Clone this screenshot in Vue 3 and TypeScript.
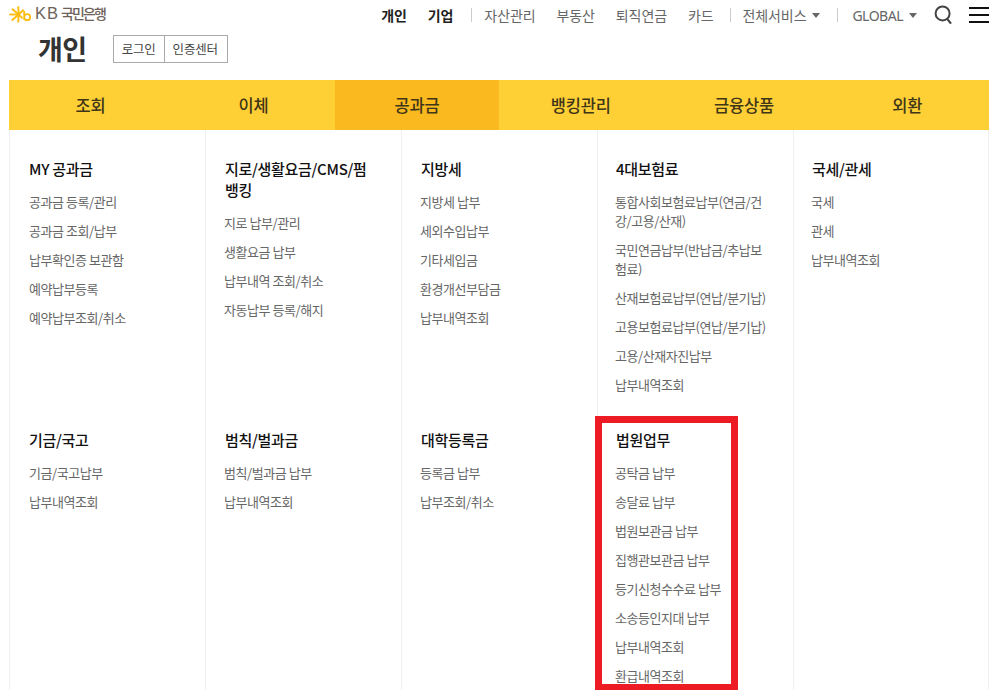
<script setup lang="ts">
interface Group { title: string; items: string[] }
const tabs = ['조회', '이체', '공과금', '뱅킹관리', '금융상품', '외환']
const rowOne: Group[] = [
  { title: 'MY 공과금', items: ['공과금 등록/관리', '공과금 조회/납부', '납부확인증 보관함', '예약납부등록', '예약납부조회/취소'] },
  { title: '지로/생활요금/CMS/펌뱅킹', items: ['지로 납부/관리', '생활요금 납부', '납부내역 조회/취소', '자동납부 등록/해지'] },
  { title: '지방세', items: ['지방세 납부', '세외수입납부', '기타세입금', '환경개선부담금', '납부내역조회'] },
  { title: '4대보험료', items: ['통합사회보험료납부(연금/건강/고용/산재)', '국민연금납부(반납금/추납보험료)', '산재보험료납부(연납/분기납)', '고용보험료납부(연납/분기납)', '고용/산재자진납부', '납부내역조회'] },
  { title: '국세/관세', items: ['국세', '관세', '납부내역조회'] },
]
const rowTwo: Group[] = [
  { title: '기금/국고', items: ['기금/국고납부', '납부내역조회'] },
  { title: '범칙/벌과금', items: ['범칙/벌과금 납부', '납부내역조회'] },
  { title: '대학등록금', items: ['등록금 납부', '납부조회/취소'] },
  { title: '법원업무', items: ['공탁금 납부', '송달료 납부', '법원보관금 납부', '집행관보관금 납부', '등기신청수수료 납부', '소송등인지대 납부', '납부내역조회', '환급내역조회'] },
  { title: '', items: [] },
]
const rows = [rowOne, rowTwo]
</script>

<template>
  <div class="page">
    <header class="top">
      <a class="logo">
        <svg class="logo-mark" width="24" height="24" viewBox="0 0 24 24" aria-hidden="true">
          <g stroke="#fbbc12" stroke-width="1.9">
            <line x1="9.7" y1="12.5" x2="0.3" y2="12.5" />
            <line x1="9.7" y1="12.5" x2="3" y2="6.8" />
            <line x1="9.7" y1="12.5" x2="2.7" y2="18.5" />
            <line x1="9.7" y1="12.5" x2="9.2" y2="4.4" />
            <line x1="9.7" y1="12.5" x2="9.2" y2="20.4" />
            <line x1="9.7" y1="12.5" x2="14.6" y2="7.6" />
            <line x1="9.7" y1="12.5" x2="13.6" y2="16.4" />
          </g>
          <path d="M15.2 9 V18 M15.2 15.2 a3 3 0 1 0 6 0 a3 3 0 1 0 -6 0" fill="none" stroke="#fbbc12" stroke-width="1.8" />
        </svg>
        <span class="logo-kb">KB</span>
        <span class="logo-name">국민은행</span>
      </a>
      <nav class="util">
        <a class="strong">개인</a>
        <a class="strong last">기업</a>
        <i class="sep"></i>
        <a>자산관리</a>
        <a>부동산</a>
        <a>퇴직연금</a>
        <a class="last-plain">카드</a>
        <i class="sep"></i>
        <a class="caret">전체서비스</a>
        <i class="sep sep-g"></i>
        <a class="caret global">GLOBAL</a>
        <svg class="search" width="18" height="20" viewBox="0 0 18 20" aria-hidden="true">
          <circle cx="8.6" cy="8.4" r="7" fill="none" stroke="#444" stroke-width="2" />
          <line x1="12.8" y1="13.4" x2="17" y2="18.6" stroke="#444" stroke-width="2.2" />
        </svg>
        <span class="burger"><b></b><b></b><b></b></span>
      </nav>
    </header>

    <div class="sub">
      <h1>개인</h1>
      <div class="btns">
        <a>로그인</a>
        <a>인증센터</a>
      </div>
    </div>

    <nav class="tabs">
      <a v-for="t in tabs" :key="t" :class="{ on: t === '공과금' }">{{ t }}</a>
    </nav>

    <section class="menu">
      <div v-for="(row, r) in rows" :key="r" class="row" :class="'row-' + r">
        <div v-for="(g, i) in row" :key="i" class="col">
          <h3 v-if="g.title">{{ g.title }}</h3>
          <ul>
            <li v-for="it in g.items" :key="it">{{ it }}</li>
          </ul>
        </div>
      </div>
    </section>

    <div class="mark"></div>
  </div>
</template>

<style>
html, body { margin: 0; padding: 0; overflow: hidden; background: #fff; }
</style>

<style scoped>
.page {
  position: relative;
  width: 993px;
  height: 690px;
  overflow: hidden;
  background: #fff;
  font-family: "Noto Sans CJK KR", "Noto Sans", sans-serif;
  color: #666;
}
.top {
  display: flex;
  justify-content: space-between;
  align-items: flex-start;
  height: 30px;
  padding-left: 9px;
}
.logo { display: flex; align-items: center; height: 27px; }
.logo-mark { display: block; margin-right: 2px; }
.logo-kb { font: 400 16.5px/27px "Liberation Sans", sans-serif; color: #6e6259; letter-spacing: 1px; margin-right: 2px; }
.logo-name { font-size: 14px; font-weight: 500; line-height: 27px; color: #6e6259; letter-spacing: -1.9px; }
.util { display: flex; align-items: center; height: 30px; font-size: 14px; color: #666; }
.util a { margin-right: 21px; white-space: nowrap; letter-spacing: -0.1px; }
.util .strong { color: #222; font-weight: 700; margin-right: 21px; }
.util .strong.last { margin-right: 18px; }
.util .last-plain { margin-right: 16px; }
.util .sep { width: 1px; height: 14px; background: #ccc; margin-right: 12px; }
.util .sep-g { margin-right: 14px; }
.util .caret { display: flex; align-items: center; margin-right: 17px; }
.caret::after {
  content: "";
  margin-left: 6px;
  border-left: 4px solid transparent;
  border-right: 4px solid transparent;
  border-top: 5px solid #666;
}
.util .global { font-family: "Noto Sans", sans-serif; letter-spacing: -0.5px; margin-right: 17px; }
.search { display: block; margin-right: 17px; }
.burger { display: flex; flex-direction: column; gap: 5px; width: 20px; margin-right: 4px; }
.burger b { display: block; height: 2px; background: #111; }

.sub { display: flex; align-items: center; height: 38px; margin-bottom: 12px; padding-left: 38px; }
.sub h1 { margin: 0 26px 0 0; font-size: 27px; line-height: 38px; font-weight: 700; color: #333; letter-spacing: -0.5px; }
.btns { display: flex; box-sizing: border-box; border: 1px solid #aaa; height: 28px; }
.btns a { padding: 0 8px; font-size: 12.5px; line-height: 26px; color: #444; letter-spacing: -0.2px; }
.btns a + a { border-left: 1px solid #aaa; padding-right: 9px; }

.tabs {
  display: grid;
  grid-template-columns: 163px 163px 164px 1fr 1fr 1fr;
  width: 980px;
  height: 50px;
  margin-left: 9px;
  background: #ffcf36;
}
.tabs a {
  font-size: 16.5px;
  font-weight: 500;
  line-height: 50px;
  text-align: center;
  color: #3f3618;
  letter-spacing: -0.2px;
}
.tabs a.on { background: #f9b91f; }

.menu { width: 980px; margin-left: 9px; }
.row { display: grid; grid-template-columns: repeat(5, 196px); }
.row-0 { height: 271px; }
.col {
  box-sizing: border-box;
  min-height: 271px;
  border-left: 1px solid #f0f0f0;
  padding: 28px 0 0 18px;
}
.col:first-child { padding-left: 19px; }
.col:nth-child(n+4) { padding-left: 17px; }
.col:last-child { border-right: 1px solid #f0f0f0; }
.col h3 { width: 152px; margin: 0 0 13px 1px; font-size: 15px; line-height: 21px; font-weight: 500; color: #111; letter-spacing: -0.3px; }
.col:first-child h3 { margin-left: 0; }
.col ul { width: 152px; margin: 0; padding: 0; list-style: none; }
.col li { font-size: 13px; line-height: 19px; margin-bottom: 10px; color: #666; letter-spacing: -0.45px; }

.mark {
  position: absolute;
  box-sizing: border-box;
  left: 595px;
  top: 416px;
  width: 143px;
  height: 274px;
  border: 7px solid #ed1c24;
  border-bottom-width: 6px;
  pointer-events: none;
}
</style>
